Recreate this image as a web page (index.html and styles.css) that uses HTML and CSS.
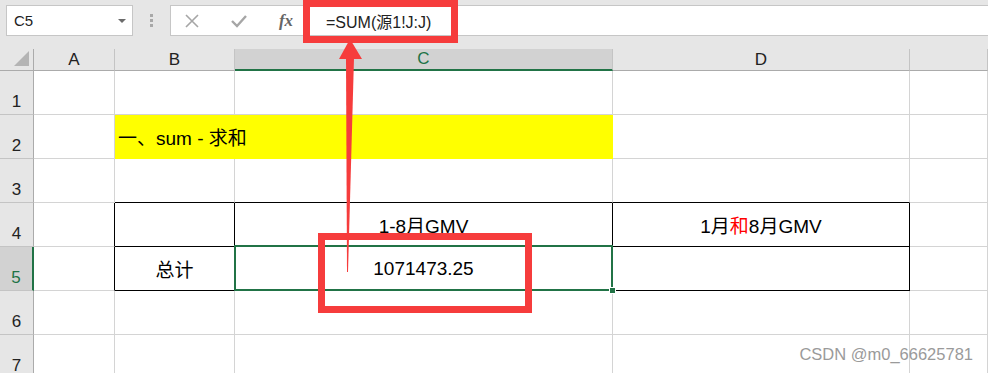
FILE: index.html
```html
<!DOCTYPE html>
<html lang="zh-CN">
<head>
    <meta charset="UTF-8">
    <title>sum - 求和</title>
    <link rel="stylesheet" href="styles.css">
</head>
<body>
    <div class="formula-bar">
        <div class="name-box">C5<span class="caret"></span></div>
        <div class="grip"><i></i><i></i><i></i></div>
        <div class="formula-box">
            <span class="fb-icon">
                <svg width="14" height="14" viewBox="0 0 14 14"><path d="M1 1 L13 13 M13 1 L1 13" stroke="#a6a6a6" stroke-width="1.6" fill="none"/></svg>
            </span>
            <span class="fb-icon">
                <svg width="16" height="14" viewBox="0 0 16 14"><path d="M1 7 L6 12 L15 2" stroke="#a6a6a6" stroke-width="2.4" fill="none"/></svg>
            </span>
            <span class="fb-icon fx">fx</span>
            <span class="formula">=SUM(源1!J:J)</span>
        </div>
    </div>

    <div class="sheet">
        <!-- header row -->
        <div class="corner"><span class="tri"></span></div>
        <div class="col-head">A</div>
        <div class="col-head">B</div>
        <div class="col-head active">C</div>
        <div class="col-head">D</div>
        <div class="col-head"></div>

        <!-- row 1 -->
        <div class="row-head">1</div>
        <div class="cell"></div><div class="cell"></div><div class="cell"></div><div class="cell"></div><div class="cell"></div>

        <!-- row 2 -->
        <div class="row-head">2</div>
        <div class="cell"></div>
        <div class="cell fill left">一、sum - 求和</div>
        <div class="cell fill"></div>
        <div class="cell"></div><div class="cell"></div>

        <!-- row 3 -->
        <div class="row-head">3</div>
        <div class="cell"></div>
        <div class="cell bb"></div><div class="cell bb"></div><div class="cell bb"></div>
        <div class="cell"></div>

        <!-- row 4 -->
        <div class="row-head">4</div>
        <div class="cell br"></div>
        <div class="cell box"></div>
        <div class="cell box">1-8月GMV</div>
        <div class="cell box">1月<span class="red">和</span>8月GMV</div>
        <div class="cell"></div>

        <!-- row 5 -->
        <div class="row-head active">5</div>
        <div class="cell br"></div>
        <div class="cell box">总计</div>
        <div class="cell box selected">1071473.25</div>
        <div class="cell box"></div>
        <div class="cell"></div>

        <!-- row 6 -->
        <div class="row-head">6</div>
        <div class="cell"></div><div class="cell"></div><div class="cell"></div><div class="cell"></div><div class="cell"></div>

        <!-- row 7 -->
        <div class="row-head">7</div>
        <div class="cell"></div><div class="cell"></div><div class="cell"></div><div class="cell"></div><div class="cell"></div>
    </div>

    <!-- annotations drawn over the sheet -->
    <div class="mark mark-formula"></div>
    <div class="mark mark-value"></div>
    <svg class="arrow" width="988" height="373" viewBox="0 0 988 373">
        <polygon points="350,39 339,59 362,59" fill="#f63c3c"/>
        <polygon points="346,58 354,58 348,272 347,272" fill="#f63c3c"/>
    </svg>

    <div class="watermark">CSDN @m0_66625781</div>
</body>
</html>
```

FILE: styles.css
```css
body {
    margin: 0;
    width: 988px;
    height: 373px;
    overflow: hidden;
    position: relative;
    background-color: #e6e6e6;
    font-family: "Liberation Sans", "Noto Sans CJK SC", sans-serif;
    color: #000000;
}

.formula-bar {
    display: flex;
    align-items: flex-start;
    height: 49px;
    padding: 5px 0 0 6px;
    box-sizing: border-box;
}

.name-box {
    width: 127px;
    height: 31px;
    box-sizing: border-box;
    border: 1px solid #c6c6c6;
    background-color: #ffffff;
    padding-left: 7px;
    font-size: 15px;
    line-height: 29px;
    color: #222222;
    position: relative;
}

.caret {
    position: absolute;
    right: 6px;
    top: 13px;
    border-left: 4px solid transparent;
    border-right: 4px solid transparent;
    border-top: 4px solid #6b6b6b;
}

.grip {
    width: 37px;
    height: 31px;
    display: flex;
    flex-direction: column;
    align-items: center;
    justify-content: center;
    gap: 2px;
}

.grip i {
    width: 3px;
    height: 3px;
    background-color: #a8a8a8;
}

.formula-box {
    flex: 1;
    height: 31px;
    box-sizing: border-box;
    border: 1px solid #c6c6c6;
    border-right: none;
    background-color: #ffffff;
    display: flex;
    align-items: center;
    padding-left: 13px;
}

.fb-icon {
    width: 16px;
    display: flex;
    justify-content: center;
    margin-right: 31px;
}

.fx {
    font-family: "Liberation Serif", "DejaVu Serif", serif;
    font-style: italic;
    font-weight: bold;
    font-size: 17px;
    color: #666666;
    margin-right: 26px;
}

.formula {
    font-size: 16px;
    color: #222222;
    padding-left: 6px;
}

.sheet {
    display: grid;
    grid-template-columns: 34px 81px 120px 378px 297px 78px;
    grid-template-rows: 22px repeat(7, 44px);
    background-color: #ffffff;
}

.corner,
.col-head,
.row-head {
    background-color: #e6e6e6;
    box-sizing: border-box;
    color: #222222;
}

.corner {
    position: relative;
    border-right: 1px solid #ababab;
    border-bottom: 1px solid #ababab;
}

.tri {
    position: absolute;
    right: 4px;
    bottom: 4px;
    border-left: 15px solid transparent;
    border-bottom: 15px solid #b4b4b4;
}

.col-head {
    border-right: 1px solid #c4c4c4;
    border-bottom: 1px solid #ababab;
    display: flex;
    align-items: center;
    justify-content: center;
    font-size: 17px;
}

.col-head.active {
    background-color: #d2d2d2;
    color: #217346;
    border-bottom: 2px solid #217346;
}

.row-head {
    border-right: 1px solid #ababab;
    border-bottom: 1px solid #c4c4c4;
    display: flex;
    align-items: flex-end;
    justify-content: center;
    padding-bottom: 2px;
    font-size: 17px;
}

.row-head.active {
    background-color: #d2d2d2;
    color: #217346;
    border-right: 2px solid #217346;
}

.cell {
    box-sizing: border-box;
    border-right: 1px solid #d4d4d4;
    border-bottom: 1px solid #d4d4d4;
    display: flex;
    align-items: center;
    justify-content: center;
    font-size: 19px;
    white-space: nowrap;
}

.cell.left {
    justify-content: flex-start;
    padding-left: 3px;
}

.cell.fill {
    background-color: #ffff00;
    border-color: #ffff00;
}

/* long text runs on into the next cell, as in the sheet */
.cell.fill.left {
    position: relative;
    z-index: 1;
}

.cell.bb {
    border-bottom-color: #000000;
}

.cell.br {
    border-right-color: #000000;
}

.cell.box {
    border-right-color: #000000;
    border-bottom-color: #000000;
}

.cell.selected {
    position: relative;
}

.cell.selected::after {
    content: "";
    position: absolute;
    top: -2px;
    left: -1px;
    right: -1px;
    bottom: -1px;
    border: 2px solid #217346;
}

.cell.selected::before {
    content: "";
    position: absolute;
    right: -4px;
    bottom: -4px;
    width: 5px;
    height: 5px;
    background-color: #217346;
    border: 1px solid #ffffff;
    z-index: 1;
}

.red {
    color: #ff0000;
}

.mark {
    position: absolute;
    border: 7px solid #f63c3c;
    box-sizing: border-box;
    z-index: 2;
}

.mark-formula {
    left: 303px;
    top: 0;
    width: 155px;
    height: 43px;
}

.mark-value {
    left: 318px;
    top: 233px;
    width: 214px;
    height: 80px;
}

.arrow {
    position: absolute;
    left: 0;
    top: 0;
    z-index: 2;
    pointer-events: none;
}

.watermark {
    position: absolute;
    right: 15px;
    bottom: 9px;
    font-size: 16.5px;
    color: #9a9a9a;
    z-index: 2;
}
```
